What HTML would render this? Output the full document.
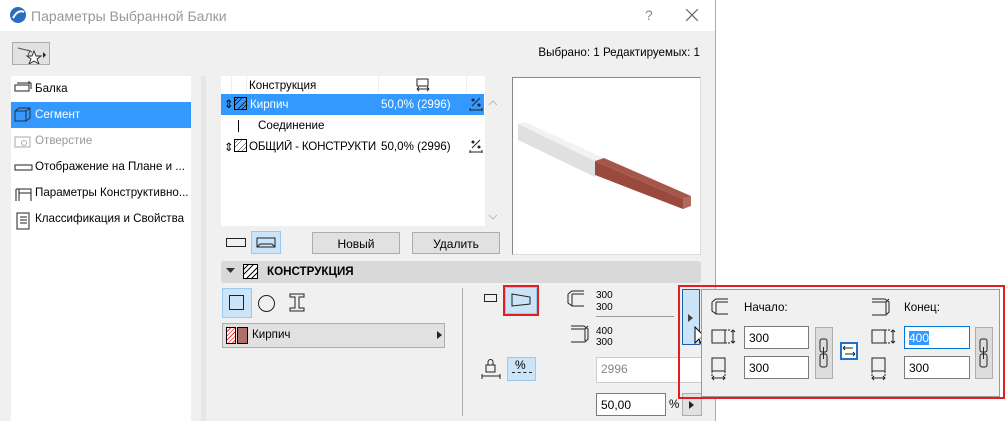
<!DOCTYPE html>
<html><head><meta charset="utf-8"><style>
*{box-sizing:border-box;margin:0;padding:0}
body{width:1006px;height:421px;position:relative;background:#fff;font-family:"Liberation Sans","DejaVu Sans",sans-serif;font-size:12px;color:#000;overflow:hidden}
.a{position:absolute}
.t{position:absolute;white-space:nowrap;font-size:11.6px}
.inp{position:absolute;background:#fff;border:1px solid #7a7a7a;font-size:12px;padding:4px 4px}
.btn{position:absolute;background:#e1e1e1;border:1px solid #adadad;text-align:center;font-size:12px}
.sel{background:#cce4f7;border:1px solid #99c9ef}
</style></head><body>
<div class="a" style="left:0;top:0;width:716px;height:421px;background:#f0f0f0;border-right:1px solid #aaa"></div>
<div class="a" style="left:0;top:0;width:715px;height:31px;background:#fff"></div>
<svg class="a" style="left:9px;top:6px" width="18" height="18"><circle cx="9" cy="9" r="8" fill="#2a6cc0"/><path d="M4 12 Q9 3 15 6" stroke="#fff" stroke-width="2" fill="none"/></svg>
<div class="t" style="left:31px;top:8px;font-size:14px;color:#999">Параметры Выбранной Балки</div>
<div class="t" style="left:645px;top:7px;font-size:14px;color:#888">?</div>
<svg class="a" style="left:686px;top:9px" width="12" height="12"><path d="M0 0L12 12M12 0L0 12" stroke="#666" stroke-width="1.2"/></svg>
<div class="a" style="left:12px;top:42px;width:38px;height:23px;background:#e1e1e1;border:1px solid #adadad"></div>
<svg class="a" style="left:16px;top:44px" width="32" height="20"><path d="M2 4L14 7L12 11M12 6l4 2" stroke="#555" fill="none"/><path d="M18 7l2 5 5 0-4 3 2 5-5-3-5 3 2-5-4-3 5 0z" stroke="#222" fill="#fff" stroke-width=".9"/><path d="M27 8l3 3-3 3z" fill="#222"/></svg>
<div class="t" style="right:306px;top:46px">Выбрано: 1 Редактируемых: 1</div>

<div class="a" style="left:11px;top:76px;width:180px;height:345px;background:#fff"></div>
<div class="a" style="left:11px;top:102px;width:180px;height:26px;background:#3399ff"></div>
<svg class="a" style="left:14px;top:80px" width="20" height="150" fill="none" stroke="#222"><rect x="1" y="5" width="14" height="6"/><path d="M3 3h14v6M15 1v3"/><g stroke="#234"><rect x="1" y="31" width="11" height="10"/><path d="M1 31l4-3h11v10l-4 3M12 31l4-3"/></g><g stroke="#aaa"><rect x="1" y="57" width="15" height="10"/><circle cx="10" cy="63" r="2.5"/></g><rect x="1" y="85" width="17" height="5"/><path d="M2 109h15v12M2 109v12M5 113h12M5 109v12"/><path d="M3 133h12v16H3zM6 137h7M6 140h7M6 143h7"/></svg>
<div class="t" style="left:35px;top:82px">Балка</div>
<div class="t" style="left:35px;top:108px;color:#fff">Сегмент</div>
<div class="t" style="left:35px;top:134px;color:#999">Отверстие</div>
<div class="t" style="left:35px;top:160px">Отображение на Плане и ...</div>
<div class="t" style="left:35px;top:186px">Параметры Конструктивно...</div>
<div class="t" style="left:35px;top:212px">Классификация и Свойства</div>

<div class="a" style="left:201px;top:76px;width:5px;height:345px;background:#e6e6e6"></div>
<div class="a" style="left:221px;top:76px;width:264px;height:150px;background:#fff"></div>
<div class="a" style="left:231px;top:76px;width:1px;height:18px;background:#eee"></div>
<div class="a" style="left:246px;top:76px;width:1px;height:18px;background:#eee"></div>
<div class="a" style="left:378px;top:76px;width:1px;height:18px;background:#eee"></div>
<div class="a" style="left:466px;top:76px;width:1px;height:18px;background:#eee"></div>
<div class="t" style="left:249px;top:79px">Конструкция</div>
<svg class="a" style="left:416px;top:78px" width="14" height="14" fill="none" stroke="#222"><rect x="1" y="1" width="11" height="7"/><path d="M1 11h12M1 11l2-2M1 11l2 2M13 11l-2-2M13 11l-2 2"/></svg>
<div class="a" style="left:221px;top:94px;width:263px;height:21px;background:#3399ff"></div>
<div class="t" style="left:224px;top:97px">⇕</div>
<svg class="a" style="left:234px;top:97px" width="14" height="14"><rect x=".5" y=".5" width="12" height="12" fill="none" stroke="#000"/><path d="M0 9L9 0M3 13L13 3M0 5L5 0M7 13L13 7" stroke="#000" stroke-width=".7"/></svg>
<div class="t" style="left:250px;top:98px;color:#fff">Кирпич</div>
<div class="t" style="left:381px;top:98px;color:#fff">50,0% (2996)</div>
<svg class="a" style="left:469px;top:97px" width="14" height="14" fill="none" stroke="#222"><path d="M3 9L11 1M1 13h12M1 11v3M13 11v3"/><circle cx="4" cy="3" r="1" fill="#222"/><circle cx="10" cy="8" r="1" fill="#222"/></svg>
<div class="a" style="left:238px;top:120px;width:1px;height:12px;background:#000"></div>
<div class="t" style="left:258px;top:119px">Соединение</div>
<div class="t" style="left:224px;top:140px">⇕</div>
<svg class="a" style="left:234px;top:139px" width="14" height="14"><rect x=".5" y=".5" width="12" height="12" fill="none" stroke="#000"/><path d="M0 9L9 0M3 13L13 3M0 5L5 0M7 13L13 7" stroke="#000" stroke-width=".5"/></svg>
<div class="t" style="left:249px;top:140px;width:128px;overflow:hidden;letter-spacing:-0.2px">ОБЩИЙ - КОНСТРУКТИ...</div>
<div class="t" style="left:381px;top:140px">50,0% (2996)</div>
<svg class="a" style="left:469px;top:139px" width="14" height="14" fill="none" stroke="#222"><path d="M3 9L11 1M1 13h12M1 11v3M13 11v3"/><circle cx="4" cy="3" r="1" fill="#222"/><circle cx="10" cy="8" r="1" fill="#222"/></svg>
<svg class="a" style="left:488px;top:100px" width="10" height="6"><path d="M1 5l4-4 4 4" stroke="#bbb" fill="none"/></svg>
<svg class="a" style="left:488px;top:214px" width="10" height="6"><path d="M1 1l4 4 4-4" stroke="#bbb" fill="none"/></svg>

<div class="a" style="left:512px;top:77px;width:189px;height:178px;background:#fff;border:1px solid #888;border-right-color:#ddd;border-bottom-color:#ddd"></div>
<svg class="a" style="left:513px;top:78px" width="187" height="176"><polygon points="5,46 12,44 91,80 82,83" fill="#f2f2f2"/><polygon points="5,46 82,83 82,99 5,62" fill="#dfe0df"/><polygon points="82,83 91,80 178,118 170,121" fill="#a5584a"/><polygon points="82,83 170,121 170,131 82,97" fill="#9a4a3c"/><polygon points="170,121 178,118 178,128 170,131" fill="#b06a5d"/></svg>

<div class="a" style="left:226px;top:238px;width:20px;height:9px;border:1px solid #222"></div>
<div class="a sel" style="left:251px;top:231px;width:30px;height:23px"></div>
<svg class="a" style="left:256px;top:235px" width="20" height="15" fill="none" stroke="#222"><path d="M1 3h18v9H1zM1 12l3-3h12l3 3"/></svg>
<div class="btn" style="left:312px;top:232px;width:88px;height:22px;padding-top:4px">Новый</div>
<div class="btn" style="left:412px;top:232px;width:88px;height:22px;padding-top:4px">Удалить</div>

<div class="a" style="left:221px;top:261px;width:480px;height:22px;background:#d9d9d9;border-radius:3px"></div>
<svg class="a" style="left:226px;top:268px" width="10" height="6"><path d="M0 0h9L4.5 5z" fill="#333"/></svg>
<svg class="a" style="left:243px;top:264px" width="16" height="16"><rect x=".5" y=".5" width="14" height="14" fill="#fff" stroke="#000"/><path d="M0 11L11 0M3 15L15 3M0 6L6 0M8 15L15 8" stroke="#000"/></svg>
<div class="t" style="left:267px;top:265px;font-weight:bold">КОНСТРУКЦИЯ</div>

<div class="a sel" style="left:222px;top:288px;width:30px;height:30px"></div>
<div class="a" style="left:229px;top:295px;width:15px;height:15px;border:1px solid #222"></div>
<div class="a" style="left:258px;top:295px;width:17px;height:17px;border:1px solid #222;border-radius:50%"></div>
<svg class="a" style="left:289px;top:293px" width="16" height="19" fill="none" stroke="#222"><path d="M1 1h14v3h-5v11h5v3H1v-3h5V4H1z"/></svg>
<div class="a" style="left:222px;top:323px;width:223px;height:25px;background:#e1e1e1;border:1px solid #adadad"></div>
<div class="a" style="left:226px;top:327px;width:10px;height:17px;border:1px solid #000;background:repeating-linear-gradient(135deg,#fff 0 2px,#f33 2px 3px)"></div>
<div class="a" style="left:237px;top:327px;width:11px;height:17px;border:1px solid #000;background:#b07068"></div>
<div class="t" style="left:252px;top:328px">Кирпич</div>
<svg class="a" style="left:437px;top:331px" width="5" height="8"><path d="M0 0l5 4-5 4z" fill="#222"/></svg>
<div class="a" style="left:462px;top:288px;width:1px;height:128px;background:#aaa"></div>

<div class="a" style="left:484px;top:294px;width:13px;height:8px;border:1px solid #222"></div>
<div class="a sel" style="left:505px;top:287px;width:32px;height:27px;outline:2px solid #e02020"></div>
<svg class="a" style="left:511px;top:293px" width="20" height="14" fill="none" stroke="#222"><path d="M1 1L19 4V11L1 13z"/></svg>
<svg class="a" style="left:567px;top:290px" width="22" height="18" fill="none" stroke="#222"><path d="M1 4L5 1H17M1 4V13L5 16H17M5 4H17M5 4V16"/></svg>
<div class="t" style="left:596px;top:290px;font-size:10px;line-height:12px">300<br>300</div>
<div class="a" style="left:596px;top:316px;width:78px;height:1px;background:#999"></div>
<svg class="a" style="left:570px;top:325px" width="20" height="18" fill="none" stroke="#222"><path d="M1 1H14L18 4V14L15 17H1M1 4H15V16M15 4L18 1"/></svg>
<div class="t" style="left:596px;top:326px;font-size:10px;line-height:11px">400<br>300</div>
<svg class="a" style="left:481px;top:358px" width="20" height="22" fill="none" stroke="#222"><rect x="5" y="7" width="9" height="7"/><path d="M7 7V4a2.5 2.5 0 015 0v3M1 16v5M19 16v5M1 18h18"/></svg>
<div class="a sel" style="left:507px;top:357px;width:29px;height:24px"></div>
<div class="t" style="left:515px;top:358px;font-size:12px">%</div>
<div class="a" style="left:512px;top:372px;width:20px;height:1px;border-top:1px dashed #222"></div>
<div class="inp" style="left:596px;top:357px;width:110px;height:26px;border-color:#ccc;color:#888">2996</div>
<div class="inp" style="left:596px;top:393px;width:70px;height:23px">50,00</div>
<div class="t" style="left:669px;top:398px">%</div>
<div class="btn" style="left:682px;top:393px;width:20px;height:23px"></div>
<svg class="a" style="left:689px;top:401px" width="5" height="8"><path d="M0 0l5 4-5 4z" fill="#222"/></svg>

<div class="a" style="left:678px;top:285px;width:327px;height:114px;border:2px solid #e02020"></div>
<div class="a" style="left:682px;top:289px;width:18px;height:56px;background:#cce4f7;border:1px solid #1c5fa8"></div>
<svg class="a" style="left:688px;top:314px" width="5" height="8"><path d="M0 0l5 4-5 4z" fill="#444"/></svg>
<svg class="a" style="left:694px;top:326px" width="14" height="22"><path d="M1 1V17L5 13L8 20L10 19L7 12H12Z" fill="#fff" stroke="#000"/></svg>
<div class="a" style="left:701px;top:289px;width:299px;height:108px;background:#f0f0f0;border:1px solid #999"></div>
<svg class="a" style="left:711px;top:298px" width="20" height="18" fill="none" stroke="#222"><path d="M1 4L5 1H17M1 4V13L5 16H17M5 4H17M5 4V16"/></svg>
<div class="t" style="left:744px;top:301px">Начало:</div>
<svg class="a" style="left:871px;top:298px" width="20" height="18" fill="none" stroke="#222"><path d="M1 1H14L18 4V14L15 17H1M1 4H15V16M15 4L18 1"/></svg>
<div class="t" style="left:904px;top:301px">Конец:</div>
<svg class="a" style="left:711px;top:328px" width="26" height="60" fill="none" stroke="#222"><rect x="1" y="2" width="13" height="13"/><path d="M14 2h6M14 15h6" stroke-dasharray="2 1"/><path d="M22 2v13M20 4l2-2 2 2M20 13l2 2 2-2"/><rect x="1" y="30" width="13" height="13"/><path d="M1 43v6M14 43v6" stroke-dasharray="2 1"/><path d="M1 50h13M3 48l-2 2 2 2M12 48l2 2-2 2"/></svg>
<svg class="a" style="left:871px;top:328px" width="26" height="60" fill="none" stroke="#222"><rect x="1" y="2" width="13" height="13"/><path d="M14 2h6M14 15h6" stroke-dasharray="2 1"/><path d="M22 2v13M20 4l2-2 2 2M20 13l2 2 2-2"/><rect x="1" y="30" width="13" height="13"/><path d="M1 43v6M14 43v6" stroke-dasharray="2 1"/><path d="M1 50h13M3 48l-2 2 2 2M12 48l2 2-2 2"/></svg>
<div class="inp" style="left:744px;top:326px;width:65px;height:23px">300</div>
<div class="inp" style="left:744px;top:356px;width:65px;height:23px">300</div>
<div class="inp" style="left:904px;top:326px;width:66px;height:23px;border-color:#0078d7"><span style="background:#3399ff;color:#fff">400</span></div>
<div class="inp" style="left:904px;top:356px;width:66px;height:23px">300</div>
<div class="a" style="left:815px;top:327px;width:18px;height:52px;background:#dcdcdc;border:1px solid #adadad"></div>
<div class="a" style="left:975px;top:327px;width:18px;height:52px;background:#dcdcdc;border:1px solid #adadad"></div>
<svg class="a" style="left:819px;top:338px" width="10" height="30" fill="none" stroke="#222"><rect x="1" y="1" width="7" height="13" rx="2"/><rect x="1" y="16" width="7" height="13" rx="2"/><path d="M4.5 9v12"/></svg>
<svg class="a" style="left:979px;top:338px" width="10" height="30" fill="none" stroke="#222"><rect x="1" y="1" width="7" height="13" rx="2"/><rect x="1" y="16" width="7" height="13" rx="2"/><path d="M4.5 9v12"/></svg>
<div class="a" style="left:840px;top:342px;width:18px;height:18px;border:2px solid #1a73d0;background:#fff"></div>
<svg class="a" style="left:842px;top:344px" width="14" height="14" fill="none" stroke="#222"><path d="M1 4h10M1 4l2-2M1 4l2 2M3 10h10M13 10l-2-2M13 10l-2 2"/></svg>
</body></html>
